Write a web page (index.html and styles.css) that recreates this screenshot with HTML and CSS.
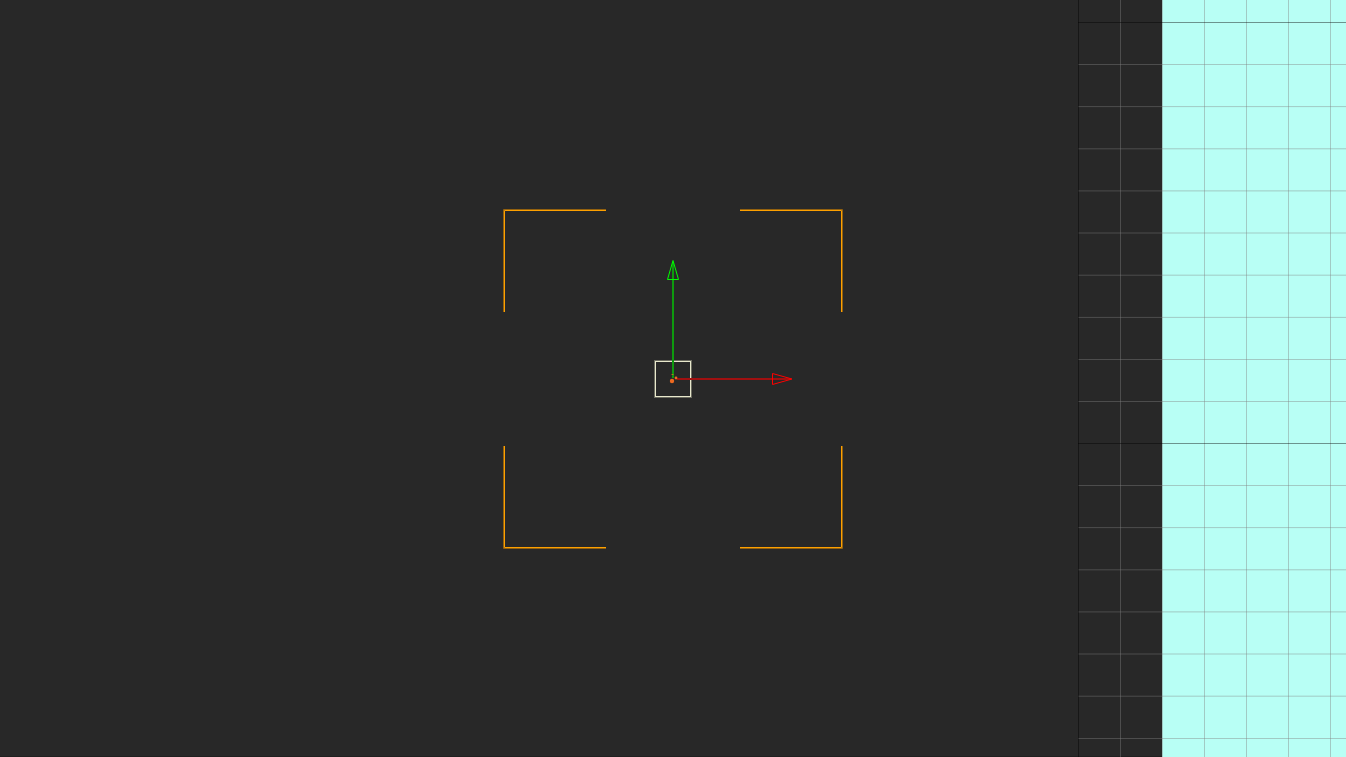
FILE: index.html
```html
<!DOCTYPE html>
<html lang="en">
<head>
<meta charset="utf-8">
<meta name="viewport" content="width=device-width, initial-scale=1">
<title>Viewport</title>
<link rel="stylesheet" href="styles.css">
</head>
<body>
<main class="viewport">
  <div class="empty"></div>
  <section class="map" aria-label="Tile grid">
    <div class="void"></div>
    <div class="tiles"></div>
    <svg class="grid" aria-hidden="true">
      <path class="minor" d="M42.5 0V4000M84.5 0V4000M126.5 0V4000M168.5 0V4000M210.5 0V4000M252.5 0V4000"/>
      <path class="minor" d="M0 64.5H268M0 106.600H268M0 148.800H268M0 190.900H268M0 233H268M0 275.200H268M0 317.400H268M0 359.500H268M0 401.500H268M0 485.500H268M0 527.600H268M0 569.800H268M0 611.900H268M0 654H268M0 696.200H268M0 738.500H268"/>
      <path class="major" d="M.5 0V4000M0 22.5H268M0 443.5H268"/>
    </svg>
  </section>
  <svg class="gizmo" viewBox="0 0 340 341" role="img" aria-label="Move gizmo with selection frame">
    <path class="frame-edge" d="M.5 104V1.5H103M237 1.5H339.5V104M339.5 238V340.5H237M103 340.5H.5V238"/>
    <path class="frame" d="M1.5 104V2.5H103M237 2.5H338.5V104M338.5 238V339.5H237M103 339.5H1.5V238"/>
    <rect class="handle-edge" x="151.5" y="152.5" width="37" height="37"/>
    <rect class="handle" x="152.5" y="153.5" width="35" height="35"/>
    <path class="y-axis" d="M170 54V170"/>
    <path class="y-head" d="M170 52.500L164.500 71.500H175.500Z"/>
    <path class="x-axis" d="M174 171H288"/>
    <path class="x-head" d="M289 171L269.500 165.500V176.500Z"/>
    <circle class="pivot" cx="169" cy="173" r="2.200"/>
    <circle class="pivot" cx="173" cy="170" r="1.400"/>
    <path class="mark" d="M168.500 166.500H170.500"/>
  </svg>
</main>
</body>
</html>
```
FILE: styles.css
```css
body {
  margin: 0;
  background: #282828;
}

.viewport {
  position: relative;
  display: flex;
  min-height: 100vh;
  overflow: hidden;
}

.empty {
  flex: 1;
  border-bottom: 1px solid #202020;
}

.map {
  position: relative;
  display: grid;
  grid-template-columns: 84px 184px;
}

.void {
  border-bottom: 1px solid #202020;
}

.tiles {
  background: #b8fff5;
}

.grid {
  position: absolute;
  inset: 0;
  width: 100%;
  height: 100%;
  fill: none;
}

.minor {
  stroke: rgba(128, 128, 128, 0.42);
}

.major {
  stroke: rgba(0, 0, 0, 0.42);
}

.gizmo {
  position: absolute;
  inset: 0;
  width: 340px;
  height: 341px;
  margin: auto;
  fill: none;
}

.frame {
  stroke: #fda000;
}

.frame-edge {
  stroke: #93610f;
}

.handle {
  stroke: #e8e8cc;
}

.handle-edge {
  stroke: #6c6c60;
}

.y-axis {
  stroke: #0e9a0e;
  stroke-width: 2;
}

.y-head {
  stroke: #00ff00;
  stroke-width: 1;
}

.x-axis {
  stroke: #a01010;
  stroke-width: 2;
}

.x-head {
  stroke: #ff0000;
  stroke-width: 1;
}

.pivot {
  fill: #ee6a20;
}

.mark {
  stroke: #b07a18;
}
```
